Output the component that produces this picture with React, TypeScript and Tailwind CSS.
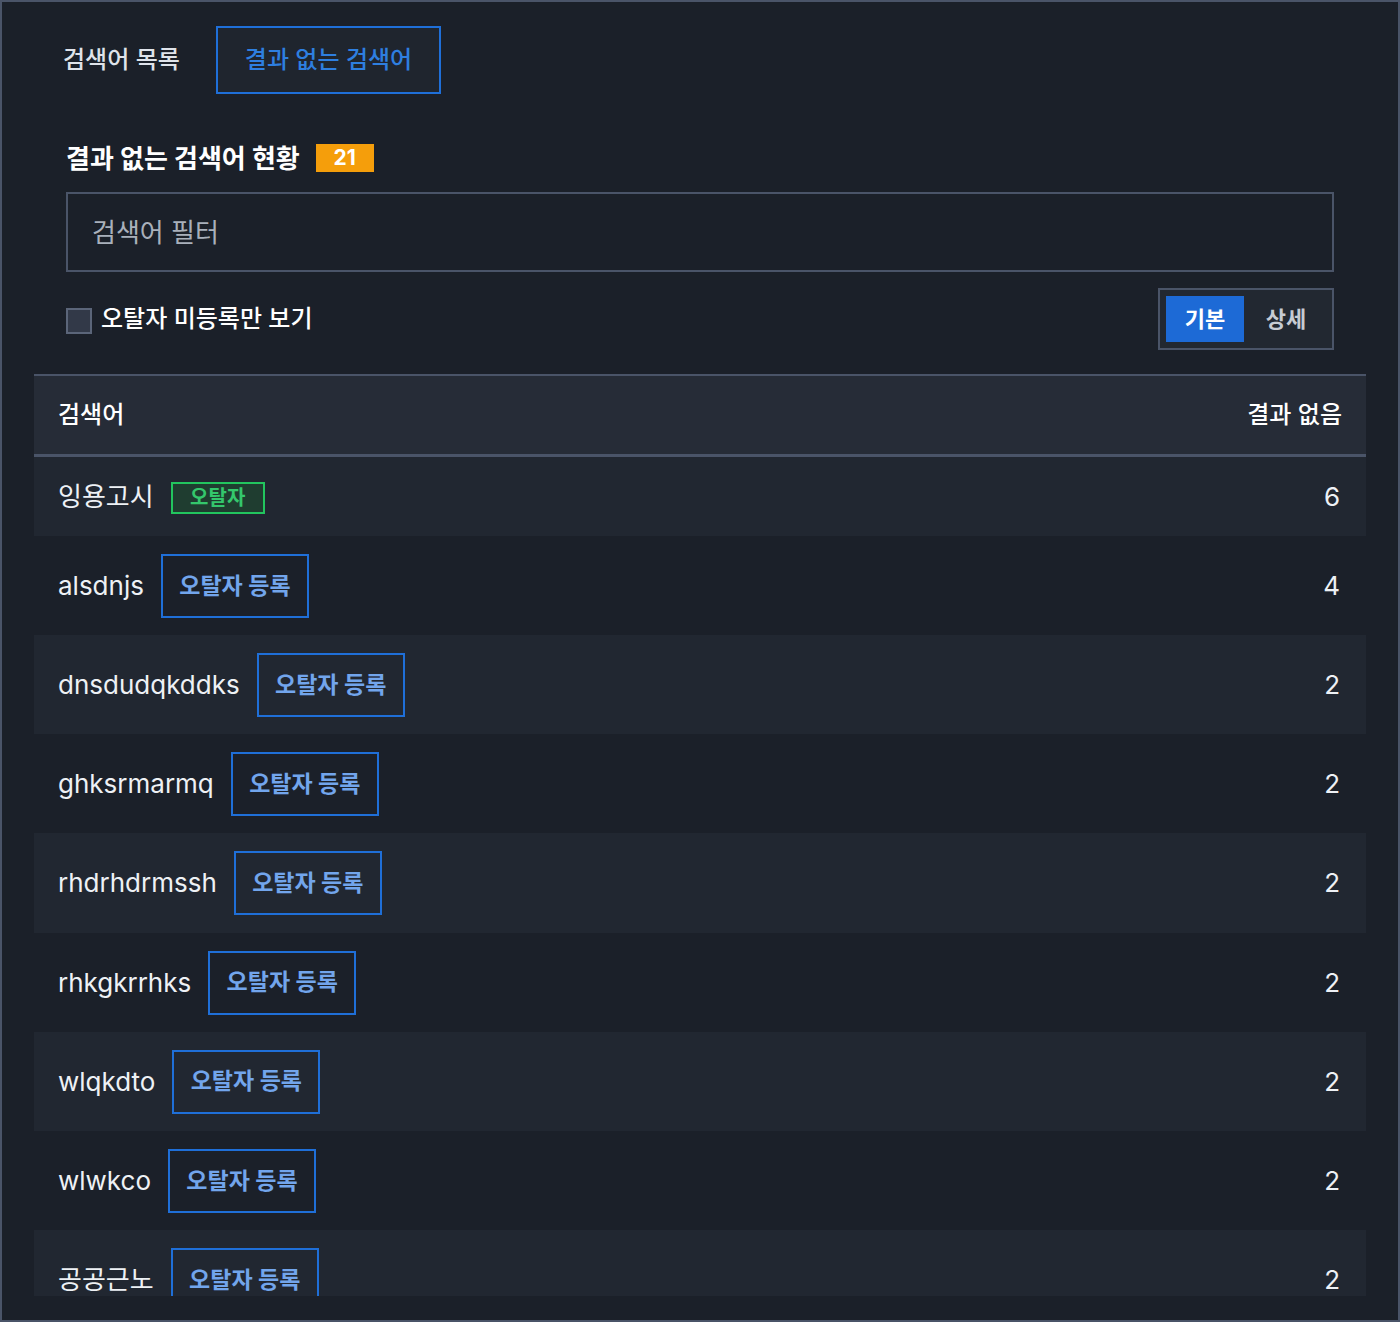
import React from "react";

const rows: { term: string; count: number; registered?: boolean }[] = [
  { term: "잉용고시", count: 6, registered: true },
  { term: "alsdnjs", count: 4 },
  { term: "dnsdudqkddks", count: 2 },
  { term: "ghksrmarmq", count: 2 },
  { term: "rhdrhdrmssh", count: 2 },
  { term: "rhkgkrrhks", count: 2 },
  { term: "wlqkdto", count: 2 },
  { term: "wlwkco", count: 2 },
  { term: "공공근노", count: 2 },
];

export default function App() {
  return (
    <div
      className="w-[1400px] h-[1322px] bg-[#1b2029] border-2 border-[#4a5468] overflow-hidden text-[#e6e9ee]"
      style={{ fontFamily: "Inter, 'Noto Sans CJK KR', sans-serif" }}
    >
      {/* Tabs */}
      <div className="flex items-center pl-[32px] pt-[24px] gap-[7px]">
        <div className="h-[68px] px-[29px] flex items-center text-[24px] font-medium text-[#dfe3ea]">
          검색어 목록
        </div>
        <div className="h-[68px] px-[27px] flex items-center text-[24px] font-medium text-[#2e7fe0] border-2 border-[#1f6fd8] bg-[#1f252e]">
          결과 없는 검색어
        </div>
      </div>

      <div className="px-[64px] pt-[48px]">
        <div className="flex items-center gap-[16px] h-[32px]">
          <span className="text-[26px] font-bold text-white">결과 없는 검색어 현황</span>
          <span className="w-[58px] h-[28px] bg-[#f59e0b] text-white text-[21px] font-bold flex items-center justify-center">
            21
          </span>
        </div>
        <div className="mt-[18px] h-[80px] border-2 border-[#4a5468] flex items-center px-[24px] text-[26px] text-[#a9b0bb]">
          검색어 필터
        </div>
        <div className="mt-[16px] flex items-center justify-between h-[62px]">
          <div className="flex items-center gap-[9px]">
            <span className="w-[26px] h-[26px] bg-[#323948] border-2 border-[#5b6579] mt-[4px]"></span>
            <span className="text-[24px] font-medium text-white">오탈자 미등록만 보기</span>
          </div>
          <div className="h-[62px] w-[176px] border-2 border-[#4a5468] bg-[#222831] p-[6px] flex">
            <div className="w-[78px] bg-[#1d6ad6] flex items-center justify-center text-[22px] font-bold text-white">
              기본
            </div>
            <div className="flex-1 flex items-center justify-center pl-[2px] text-[22px] font-bold text-[#c6cbd3]">
              상세
            </div>
          </div>
        </div>
      </div>

      {/* Table */}
      <div className="mx-[32px] mt-[24px] h-[922px] overflow-hidden">
        <div className="border-t-2 border-b-[3px] border-[#4a5468] bg-[#262c37] h-[83px] flex items-center justify-between px-[24px] text-[24px] font-medium text-white">
          <span>검색어</span>
          <span>결과 없음</span>
        </div>
        {rows.map((r, i) => (
          <div
            key={i}
            className={
              "flex items-center justify-between pl-[24px] pr-[26px] " +
              (i % 2 === 0 ? "bg-[#212731] " : "bg-[#1b2029] ") +
              (r.registered ? "h-[79px]" : "h-[99.14px]")
            }
          >
            <div className="flex items-center gap-[17px]">
              <span className="text-[26px] text-[#eef1f5]">{r.term}</span>
              {r.registered ? (
                <span className="w-[94px] h-[32px] border-2 border-[#22c55e] bg-[#1f3d30] text-[#34c76c] text-[20px] font-bold flex items-center justify-center mt-[3px]">
                  오탈자
                </span>
              ) : (
                <span className="w-[148px] h-[64px] border-2 border-[#1f6fd8] text-[#72a5ec] text-[23px] font-bold flex items-center justify-center mt-[1px]">
                  오탈자 등록
                </span>
              )}
            </div>
            <span className="text-[26px] text-[#eef1f5]">{r.count}</span>
          </div>
        ))}
      </div>
    </div>
  );
}
